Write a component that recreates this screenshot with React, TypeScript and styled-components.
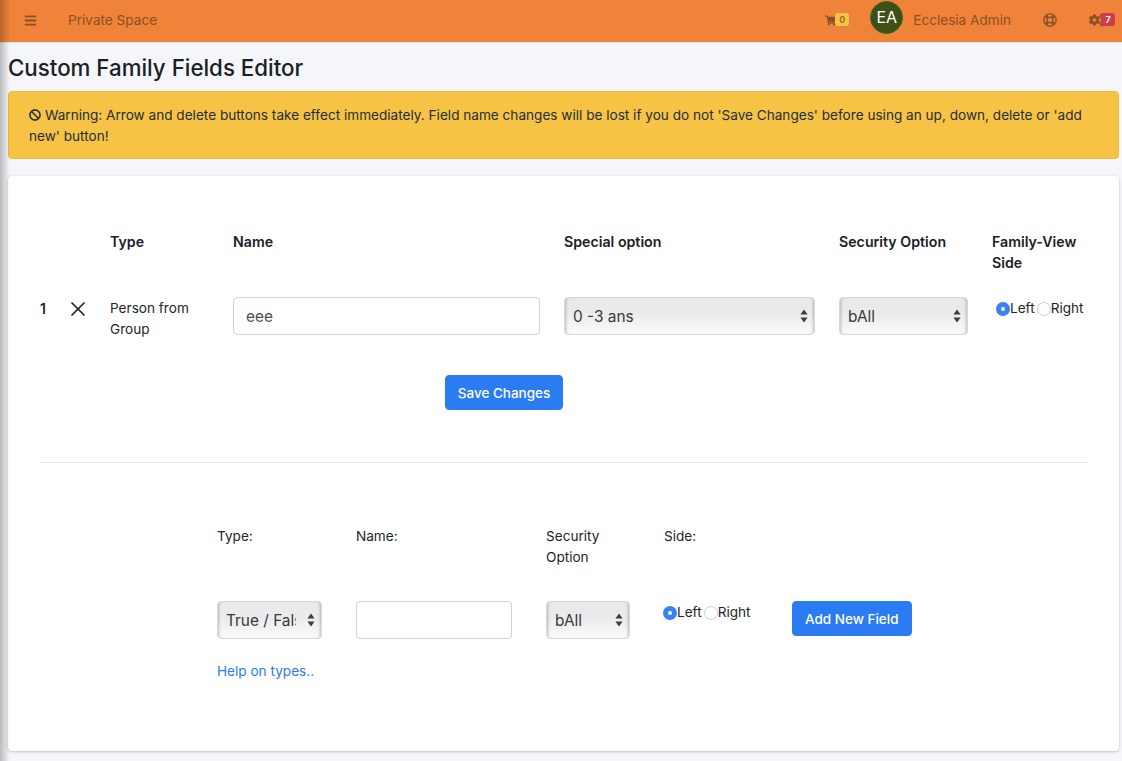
import React from "react";
import styled, { createGlobalStyle } from "styled-components";
import { FaBars, FaBan, FaCogs, FaRegLifeRing, FaShoppingCart } from "react-icons/fa";
import { X } from "lucide-react";

const GlobalStyle = createGlobalStyle`
  html, body {
    margin: 0;
    padding: 0;
    height: 100%;
    overflow: hidden;
    background: #f4f6f9;
    color: #212529;
    font-family: Inter, "Liberation Sans", sans-serif;
    font-size: 13.6px;
    line-height: 21px;
  }
  * {
    box-sizing: border-box;
  }
`;

const Page = styled.div`
  position: relative;
  width: 1122px;
  height: 761px;
  overflow: hidden;
`;

const SideShade = styled.div`
  position: absolute;
  left: 0;
  top: 0;
  bottom: 0;
  width: 10px;
  background: linear-gradient(90deg, rgba(0, 0, 0, 0.24), rgba(0, 0, 0, 0));
  pointer-events: none;
`;

const Navbar = styled.nav`
  display: flex;
  align-items: center;
  height: 43px;
  padding: 0 17px 2px 24px;
  background: #ef833a;
  color: #8a4f24;
  border-bottom: 1px solid #dee2e6;
`;

const NavTitle = styled.span`
  margin-left: 31px;
`;

const NavRight = styled.div`
  display: flex;
  align-items: center;
  margin-left: auto;
`;

const IconBox = styled.span<{ $gap: number }>`
  position: relative;
  display: inline-flex;
  align-items: center;
  height: 12px;
  margin-left: ${(p) => p.$gap}px;
`;

const Badge = styled.span<{ $bg: string; $color: string; $left: number }>`
  position: absolute;
  top: -1px;
  left: ${(p) => p.$left}px;
  width: 14px;
  height: 13px;
  border-radius: 3px;
  background: ${(p) => p.$bg};
  color: ${(p) => p.$color};
  font-size: 9px;
  font-weight: 600;
  line-height: 13px;
  text-align: center;
`;

const Avatar = styled.span`
  display: flex;
  align-items: center;
  justify-content: center;
  width: 33px;
  height: 33px;
  margin: 0 0 5px 34px;
  border: 1px solid #2f6a22;
  border-radius: 50%;
  background: #3f5016;
  color: #fff;
  font-size: 16px;
`;

const UserName = styled.span`
  margin-left: 10px;
`;

const Main = styled.main`
  padding: 0 3px 0 8px;
`;

const Title = styled.h1`
  margin: 0;
  padding-top: 11px;
  height: 48px;
  font-size: 22.3px;
  font-weight: 500;
  line-height: 28px;
  color: #1b2026;
`;

const Alert = styled.div`
  height: 68px;
  padding: 13px 20px;
  background: #f6c344;
  border: 1px solid #ecbb40;
  border-radius: 4px;
  color: #1f2d3d;

  svg {
    width: 12px;
    height: 12px;
    vertical-align: -1px;
    margin-right: 4px;
  }
`;

const Card = styled.section`
  height: 575px;
  margin-top: 17px;
  padding: 55px 31px 0 32px;
  background: #fff;
  border-radius: 4px;
  box-shadow: 0 0 1px rgba(0, 0, 0, 0.125), 0 1px 3px rgba(0, 0, 0, 0.2);
`;

const FieldGrid = styled.div`
  display: grid;
  grid-template-columns: 32px 38px 123px 331px 275px 153px 96px;
  grid-template-rows: 66px 78px;
`;

const HeadCell = styled.div`
  font-size: 14.2px;
  font-weight: 600;
  color: #1b2026;
`;

const Cell = styled.div``;

const TextCell = styled.div`
  padding: 1px 24px 0 0;
`;

const RowNumber = styled(TextCell)`
  padding-right: 0;
  font-size: 14px;
  font-weight: 600;
`;

const RemoveButton = styled.button`
  display: block;
  padding: 0;
  margin-left: -6px;
  border: 0;
  background: none;
  color: #212529;

  svg {
    display: block;
  }
`;

const Input = styled.input<{ $width: string }>`
  display: block;
  width: ${(p) => p.$width};
  height: 38px;
  padding: 0 12px;
  border: 1px solid #ced4da;
  border-radius: 4px;
  background: #fff;
  color: #495057;
  font: 15.4px Inter, "Liberation Sans", sans-serif;
`;

const SelectWrap = styled.div<{ $width: string }>`
  position: relative;
  width: ${(p) => p.$width};
  height: 38px;

  svg {
    position: absolute;
    right: 7px;
    top: 12px;
    width: 8px;
    height: 14px;
    pointer-events: none;
  }
`;

const Select = styled.select`
  appearance: none;
  display: block;
  width: 100%;
  height: 100%;
  padding: 0 25px 0 8px;
  border: 1px solid #d5d9dd;
  border-radius: 4px;
  background: linear-gradient(180deg, #e9e9e9 0%, #ebebeb 45%, #fbfbfb 100%);
  box-shadow: inset 3px 0 3px -2px rgba(0, 0, 0, 0.22), inset -3px 0 3px -2px rgba(0, 0, 0, 0.22);
  color: #333a40;
  font: 15.4px Inter, "Liberation Sans", sans-serif;
`;

const RadioGroup = styled.div<{ $indent: number }>`
  display: flex;
  align-items: center;
  height: 21px;
  margin: 1px 0 0 ${(p) => p.$indent}px;
`;

const RadioLabel = styled.label`
  display: inline-flex;
  align-items: center;

  & + & {
    margin-left: 2px;
  }
`;

const Radio = styled.input`
  appearance: none;
  width: 14px;
  height: 14px;
  margin: 0;
  border: 1px solid #cfcfcf;
  border-radius: 50%;
  background: #fff;

  &:checked {
    border: 5px solid #3b82f0;
  }
`;

const SaveRow = styled.div`
  display: flex;
  justify-content: center;
  padding-right: 120px;
`;

const PrimaryButton = styled.button`
  height: 35px;
  padding: 0 12px;
  border: 1px solid #2b7bf2;
  border-radius: 4px;
  background: #2b7bf2;
  color: #fff;
  font: 500 13.5px Inter, "Liberation Sans", sans-serif;
`;

const Divider = styled.hr`
  margin: 52px 0 0;
  border: 0;
  border-top: 1px solid #e3e5e8;
`;

const NewFieldGrid = styled.div`
  display: grid;
  grid-template-columns: 139px 190px 118px 128px auto;
  grid-template-rows: 75px 38px;
  margin: 63px 0 0 177px;
`;

const HelpLink = styled.a`
  display: inline-block;
  margin: 22px 0 0 177px;
  color: #2b7bf2;
  text-decoration: none;
`;

const Arrows = () => (
  <svg viewBox="0 0 8 14">
    <path d="M4 0.5 L7.6 5.5 H0.4 Z M4 13.5 L0.4 8.5 H7.6 Z" fill="#3a4045" />
  </svg>
);

const SideRadios = ({ name, indent }: { name: string; indent: number }) => (
  <RadioGroup $indent={indent}>
    <RadioLabel>
      <Radio type="radio" name={name} defaultChecked />
      Left
    </RadioLabel>
    <RadioLabel>
      <Radio type="radio" name={name} />
      Right
    </RadioLabel>
  </RadioGroup>
);

const FieldSelect = ({ width, value }: { width: string; value: string }) => (
  <SelectWrap $width={width}>
    <Select defaultValue={value}>
      <option>{value}</option>
    </Select>
    <Arrows />
  </SelectWrap>
);

export default function App() {
  return (
    <Page>
      <GlobalStyle />
      <Navbar>
        <FaBars size={13} />
        <NavTitle>Private Space</NavTitle>
        <NavRight>
          <IconBox $gap={0}>
            <FaShoppingCart size={11} />
            <Badge $bg="#f6c344" $color="#8f6a20" $left={10}>0</Badge>
          </IconBox>
          <Avatar>EA</Avatar>
          <UserName>Ecclesia Admin</UserName>
          <IconBox $gap={32}>
            <FaRegLifeRing size={14} />
          </IconBox>
          <IconBox $gap={32}>
            <FaCogs size={16} />
            <Badge $bg="#d13a4c" $color="#fff" $left={12}>7</Badge>
          </IconBox>
        </NavRight>
      </Navbar>
      <Main>
        <Title>Custom Family Fields Editor</Title>
        <Alert>
          <FaBan />
          Warning: Arrow and delete buttons take effect immediately. Field name changes will be lost if you do not 'Save Changes' before using an up, down, delete or 'add new' button!
        </Alert>
        <Card>
          <FieldGrid>
            <HeadCell />
            <HeadCell />
            <HeadCell>Type</HeadCell>
            <HeadCell>Name</HeadCell>
            <HeadCell>Special option</HeadCell>
            <HeadCell>Security Option</HeadCell>
            <HeadCell>Family-View Side</HeadCell>
            <RowNumber>1</RowNumber>
            <Cell>
              <RemoveButton aria-label="Delete">
                <X size={24} strokeWidth={1.7} />
              </RemoveButton>
            </Cell>
            <TextCell>Person from Group</TextCell>
            <Cell>
              <Input $width="307px" defaultValue="eee" />
            </Cell>
            <Cell>
              <FieldSelect width="251px" value="0 -3 ans" />
            </Cell>
            <Cell>
              <FieldSelect width="129px" value="bAll" />
            </Cell>
            <Cell>
              <SideRadios name="side-1" indent={4} />
            </Cell>
          </FieldGrid>
          <SaveRow>
            <PrimaryButton>Save Changes</PrimaryButton>
          </SaveRow>
          <Divider />
          <NewFieldGrid>
            <Cell>Type:</Cell>
            <Cell>Name:</Cell>
            <Cell>Security<br />Option</Cell>
            <Cell>Side:</Cell>
            <Cell />
            <Cell>
              <FieldSelect width="105px" value="True / False" />
            </Cell>
            <Cell>
              <Input $width="156px" />
            </Cell>
            <Cell>
              <FieldSelect width="84px" value="bAll" />
            </Cell>
            <Cell>
              <SideRadios name="side-new" indent={-1} />
            </Cell>
            <Cell>
              <PrimaryButton>Add New Field</PrimaryButton>
            </Cell>
          </NewFieldGrid>
          <HelpLink href="#help">Help on types..</HelpLink>
        </Card>
      </Main>
      <SideShade />
    </Page>
  );
}
